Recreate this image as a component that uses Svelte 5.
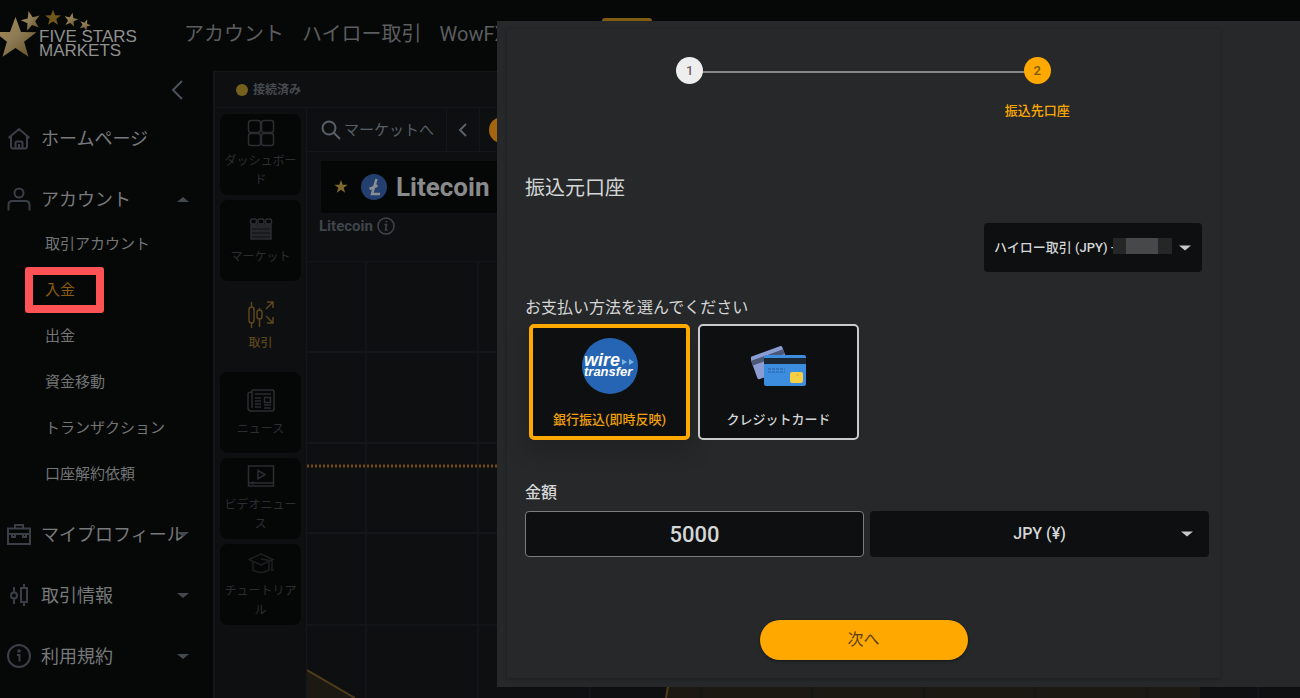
<script>
  let method = $state('wire');
  let amount = $state('5000');
  let currency = $state('jpy');
  let account = $state('highlow');

  const subLinks = ['取引アカウント', '入金', '出金', '資金移動', 'トランザクション', '口座解約依頼'];

  const lowerMenu = [
    { label: 'マイプロフィール', icon: 'case' },
    { label: '取引情報', icon: 'candles' },
    { label: '利用規約', icon: 'info' }
  ];

  const tools = [
    { label: 'ダッシュボード', icon: 'grid' },
    { label: 'マーケット', icon: 'market' },
    { label: '取引', icon: 'trade' },
    { label: 'ニュース', icon: 'news' },
    { label: 'ビデオニュース', icon: 'video' },
    { label: 'チュートリアル', icon: 'cap' }
  ];

  const columns = [59, 171, 283, 394, 505, 617, 728, 840, 951];
  const rows = [0, 91, 182, 272, 364];
</script>

{#snippet icon(name)}
  {#if name === 'home'}
    <svg class="icon" viewBox="0 0 24 24"><path d="M1.500 12 12 3l10.500 9M4 10.500v10q0 2 2 2h12q2 0 2-2v-10M8.500 22.500V17q0-1.500 1.500-1.500h4q1.500 0 1.500 1.500v5.500M12 18v4.500" /></svg>
  {:else if name === 'user'}
    <svg class="icon" viewBox="0 0 24 24"><circle cx="12" cy="6" r="4.500" /><path d="M1.500 23.500V18q0-4 4-4h13q4 0 4 4v5.500" /></svg>
  {:else if name === 'case'}
    <svg class="icon" viewBox="0 0 24 24"><path d="M1 6.500h22v15.500H1zM8 6V3h8v3M1 12h22M5 12v3h3v-3M16 12v3h3v-3" /></svg>
  {:else if name === 'candles'}
    <svg class="icon" viewBox="0 0 24 24"><path d="M7 4v6M7 15v6M17 1v4M17 19v4M14 5h6v14h-6z" /><circle cx="7" cy="12.500" r="3" /></svg>
  {:else if name === 'info'}
    <svg class="icon" viewBox="0 0 24 24"><circle cx="12" cy="12" r="11" /><circle cx="12" cy="7" r=".8" /><path d="M10 11h2.500v6.500" /></svg>
  {:else if name === 'grid'}
    <svg class="icon" viewBox="0 0 28 28"><rect x="1.500" y="1.500" width="12" height="12" rx="2.500" /><rect x="14.500" y="1.500" width="12" height="12" rx="2.500" /><rect x="1.500" y="14.500" width="12" height="12" rx="2.500" /><rect x="14.500" y="14.500" width="12" height="12" rx="2.500" /></svg>
  {:else if name === 'market'}
    <svg class="icon" viewBox="0 0 28 28"><rect x="3.500" y="4" width="6" height="5" rx="2" /><rect x="11" y="4" width="6" height="5" rx="2" /><rect x="18.500" y="4" width="6" height="5" rx="2" /><path class="solid" d="M4 10h20v14H4z" /><path d="M4 12h20M4 16h20M4 20h20" /></svg>
  {:else if name === 'trade'}
    <svg class="icon" viewBox="0 0 28 28"><path d="M4.500 1v5M4.500 22v5M12.500 7v2M12.500 18v8M19 8l7-7M20 1h6v6M19 15l7 7M26 16v6h-6" /><rect x="2" y="6" width="5" height="16" rx="2.500" /><rect x="10" y="9" width="5" height="9" rx="2.500" /></svg>
  {:else if name === 'news'}
    <svg class="icon" viewBox="0 0 28 28"><path d="M5 3h20q2 0 2 2v17q0 2-2 2H4q-3 0-3-3V7q0-2 4-2M5 3v18M8 7h16M8 11h6M8 14h6M8 17h6M8 20h6M17 18h7M17 21h7" /><rect x="17.500" y="10.500" width="6" height="5" /></svg>
  {:else if name === 'video'}
    <svg class="icon" viewBox="0 0 28 28"><path d="M1.500 3h25v20h-25zM1 20h26M11 7.500l7 4-7 4.500zM6 18.500v3" /></svg>
  {:else if name === 'cap'}
    <svg class="icon faint" viewBox="0 0 28 28"><path d="M14 5 26 10.500 14 16 2 10.500zM6 13v8q8 5 16 0v-8M14 10l11 2v10M24 21h3" /></svg>
  {/if}
{/snippet}

<div class="page">
  <header class="top">
    <a class="logo" href="#home">
      <svg viewBox="0 0 92 50" aria-hidden="true">
        <defs>
          <linearGradient id="gold" x1="0" y1="0" x2="1" y2="1">
            <stop offset="0" stop-color="#a78b52" />
            <stop offset="0.500" stop-color="#8d7a55" />
            <stop offset="1" stop-color="#5f4b1d" />
          </linearGradient>
          <path id="star" d="M0-10 2.500-3.200 9.500-3.100 3.900 1.200 5.900 8.100 0 4.100-5.900 8.100-3.900 1.200-9.500-3.100-2.500-3.200z" />
        </defs>
        <g fill="url(#gold)">
          <use href="#star" transform="translate(15.500 29) scale(2.200)" />
          <use href="#star" transform="translate(31 11) rotate(-14) scale(1.020)" />
          <use href="#star" transform="translate(53 8) scale(.84)" fill="#70581b" />
          <use href="#star" transform="translate(71 10) rotate(12) scale(.74)" />
          <use href="#star" transform="translate(85 15) rotate(22) scale(.6)" />
        </g>
      </svg>
      <span>FIVE STARS<br />MARKETS</span>
    </a>
    <nav class="topnav">
      <a href="#account">アカウント</a>
      <a href="#highlow">ハイロー取引</a>
      <a href="#wow">WowFX</a>
      <span class="tab"></span>
    </nav>
  </header>

  <aside class="side">
    <button class="collapse" aria-label="閉じる">
      <svg viewBox="0 0 12 20"><path d="M11 1 2 10l9 9" /></svg>
    </button>
    <nav class="menu">
      <a class="item" href="#top">{@render icon('home')}<span>ホームページ</span></a>
      <div>
        <button class="item">{@render icon('user')}<span>アカウント</span><i class="caret up"></i></button>
        <ul class="sub">
          {#each subLinks as link}
            <li><a href="#sub" class:current={link === '入金'}>{link}</a></li>
          {/each}
        </ul>
      </div>
      {#each lowerMenu as entry}
        <button class="item">{@render icon(entry.icon)}<span>{entry.label}</span><i class="caret"></i></button>
      {/each}
    </nav>
  </aside>

  <main class="desk">
    <div class="status"><i class="dot"></i>接続済み</div>
    <div class="work">
      <div class="tools">
        {#each tools as tool}
          <button class="tool" class:active={tool.icon === 'trade'}>{@render icon(tool.icon)}<span>{tool.label}</span></button>
        {/each}
      </div>
      <section class="trade">
        <div class="bar">
          <button class="search">
            <svg viewBox="0 0 20 20"><circle cx="8" cy="8" r="6.500" /><path d="m12.500 12.500 6.500 6.500" /></svg>
            マーケットへ
          </button>
          <button class="prev" aria-label="前へ"><svg viewBox="0 0 10 14"><path d="M8 1 2 7l6 6" /></svg></button>
          <span class="coin"></span>
        </div>
        <div class="asset">
          <svg class="fav" viewBox="-10 -10 20 20"><use href="#star" /></svg>
          <svg class="ltc" viewBox="0 0 26 26"><circle cx="13" cy="13" r="13" /><path d="M15.500 5 11 20h8M8.500 15l8-3.500" /></svg>
          <h1>Litecoin</h1>
        </div>
        <p class="caption">Litecoin
          <svg viewBox="0 0 18 18"><circle cx="9" cy="9" r="8" /><path d="M7.500 7.500h2L8.500 13h2M9.500 4v1.500" /></svg>
        </p>
        <svg class="chart" viewBox="0 0 993 437" preserveAspectRatio="xMinYMin slice" aria-hidden="true">
          <path class="fill" d="M0 409 48 437H0zM361 425H893v12H359z" />
          {#each columns as x}<path class="grid" d="M{x} 0V437" />{/each}
          {#each rows as y}<path class="grid" d="M0 {y}H993" />{/each}
          <path class="curve" d="M0 409 48 437M361 425 359 437" />
          <path class="price" d="M0 205H993" />
        </svg>
      </section>
    </div>
  </main>

  <div class="dialog" role="dialog" aria-label="入金">
    <form class="sheet" onsubmit={(event) => event.preventDefault()}>
      <ol class="steps">
        <li><b>1</b></li>
        <li class="now"><b>2</b><span>振込先口座</span></li>
      </ol>

      <h2>振込元口座</h2>
      <div class="pick source">
        <select bind:value={account} aria-label="振込元口座">
          <option value="highlow">ハイロー取引 (JPY) -</option>
        </select>
        <span class="mask"><i></i><i></i><i></i></span>
        <i class="caret"></i>
      </div>

      <fieldset>
        <legend>お支払い方法を選んでください</legend>
        <label class="method" class:chosen={method === 'wire'}>
          <input type="radio" name="method" value="wire" bind:group={method} />
          <svg class="wire" viewBox="0 0 56 56">
            <circle cx="28" cy="28" r="28" fill="#2565b3" />
            <text x="2" y="28" class="w1">wire</text>
            <text x="2" y="38" class="w2">transfer</text>
            <path d="m40 21 5 3-5 3zM47 21l5 3-5 3z" fill="#79b5df" />
          </svg>
          <span>銀行振込(即時反映)</span>
        </label>
        <label class="method" class:chosen={method === 'card'}>
          <input type="radio" name="method" value="card" bind:group={method} />
          <svg class="cards" viewBox="0 0 56 56">
            <g transform="rotate(-20 20 22)">
              <rect x="1" y="12" width="34" height="24" rx="2" fill="#8b9cd3" />
              <path d="M1 16h34v5H1z" fill="#4c5878" />
            </g>
            <rect x="13" y="17" width="42" height="31" rx="2" fill="#3c8ddf" />
            <path d="M13 20h42v6H13z" fill="#1b2732" />
            <path d="M17 31h17M17 34h17" stroke="#245f9d" stroke-dasharray="3 1" />
            <rect x="39" y="34" width="13" height="11" rx="2" fill="#f7cf45" />
            <path d="M45 37h3" stroke="#e3ad2b" />
          </svg>
          <span>クレジットカード</span>
        </label>
      </fieldset>

      <label class="heading" for="amount">金額</label>
      <div class="sum">
        <input id="amount" type="text" inputmode="numeric" bind:value={amount} />
        <div class="pick money">
          <select bind:value={currency} aria-label="通貨">
            <option value="jpy">JPY (¥)</option>
          </select>
          <i class="caret"></i>
        </div>
      </div>

      <div class="actions"><button class="next" type="submit">次へ</button></div>
    </form>
  </div>
</div>

<style>
  :global(body) {
    margin: 0;
    background: #060807;
  }
  :global(*) {
    box-sizing: border-box;
  }
  .page {
    position: relative;
    display: grid;
    grid-template: 71px 1fr / 213px 1fr;
    min-height: 100vh;
    overflow: hidden;
    background: #060807;
    color: #77797b;
    font: 16px/20px Roboto, 'Noto Sans CJK JP', sans-serif;
  }
  a {
    color: inherit;
    text-decoration: none;
  }
  button,
  input,
  select {
    margin: 0;
    padding: 0;
    border: 0;
    background: none;
    color: inherit;
    font: inherit;
  }
  svg {
    display: block;
    flex: none;
  }
  .icon,
  .collapse svg,
  .bar svg,
  .caption svg {
    fill: none;
    stroke: currentColor;
    stroke-width: 1.500;
  }
  .caret {
    border: solid transparent;
    border-width: 5px 6px 0;
    border-top-color: #444950;
  }
  .caret.up {
    border-width: 0 6px 5px;
    border-bottom-color: #444950;
  }

  .top {
    grid-column: 1 / -1;
    display: flex;
  }
  .logo {
    position: relative;
    width: 184px;
  }
  .logo svg {
    width: 92px;
    height: 50px;
    margin-top: 10px;
  }
  .logo span {
    position: absolute;
    top: 30px;
    left: 39px;
    color: #909090;
    font: 17px/14px 'Liberation Sans', sans-serif;
    white-space: nowrap;
  }
  .topnav {
    display: flex;
    align-items: start;
    gap: 18px;
    padding-top: 18px;
    font-size: 20px;
    line-height: 32px;
    color: #5b5d5f;
    white-space: nowrap;
  }
  .tab {
    width: 50px;
    height: 32px;
    margin-left: 77px;
    border-radius: 3px;
    background: #805b12;
  }

  .collapse {
    display: block;
    margin: 9px 0 0 171px;
    color: #4a515b;
  }
  .collapse svg {
    width: 12px;
    height: 20px;
    stroke-width: 2;
  }
  .menu {
    display: grid;
    gap: 17px;
    padding: 16px 24px 0 7px;
  }
  .item {
    display: flex;
    align-items: center;
    gap: 10px;
    width: 100%;
    height: 44px;
    font-size: 18px;
    text-align: left;
    white-space: nowrap;
  }
  .item .icon {
    width: 24px;
    height: 24px;
    color: #3a3e46;
    stroke-width: 2;
  }
  .item span {
    width: 130px;
    flex: 1;
    padding-top: 2px;
  }
  .item .caret {
    margin-left: -10px;
  }
  .sub {
    display: grid;
    gap: 11px;
    margin: 0;
    padding: 6px 0 3px 38px;
    list-style: none;
    font-size: 15px;
    line-height: 35px;
    color: #727476;
  }
  .sub .current {
    position: relative;
    color: #8b5b10;
  }
  .current::after {
    content: '';
    position: absolute;
    inset: -14px -29px -14px -20px;
    border: 8px solid #ff5255;
    border-radius: 3px;
  }

  .desk {
    display: flex;
    flex-direction: column;
    min-width: 0;
    border: solid #14161a;
    border-width: 1px 0 0 2px;
    background: #0d0f11;
  }
  .status {
    display: flex;
    align-items: center;
    gap: 5px;
    height: 36px;
    padding-left: 21px;
    border-bottom: 1px solid #14161a;
    color: #454a4f;
    font-size: 12px;
    font-weight: 700;
  }
  .dot {
    width: 12px;
    height: 12px;
    border-radius: 50%;
    background: #75601e;
  }
  .work {
    display: flex;
    flex: 1;
  }
  .tools {
    display: grid;
    align-content: start;
    gap: 5px;
    width: 92px;
    padding: 6px 5px 0;
    border-right: 1px solid #14161a;
  }
  .tool {
    display: flex;
    flex-direction: column;
    align-items: center;
    justify-content: center;
    gap: 5px;
    height: 81px;
    padding: 0 3px;
    border-radius: 8px;
    background: #050706;
    color: #2b2d31;
    font-size: 12px;
    line-height: 19px;
    word-break: break-all;
  }
  .tool .icon {
    width: 28px;
    height: 28px;
  }
  .tool .solid {
    fill: #191b1e;
  }
  .tool .faint {
    color: #1d1f21;
  }
  .tool.active {
    background: none;
    color: #5c461b;
    font-weight: 500;
  }
  .trade {
    flex: 1;
    min-width: 0;
  }
  .bar {
    display: flex;
    height: 44px;
    border-bottom: 1px solid #14161a;
    color: #5a6068;
  }
  .search {
    display: flex;
    align-items: center;
    gap: 3px;
    width: 140px;
    padding-left: 14px;
    border-right: 1px solid #14161a;
    font-size: 15px;
    white-space: nowrap;
  }
  .search svg {
    width: 20px;
    height: 20px;
    stroke-width: 2;
  }
  .prev {
    display: grid;
    place-items: center;
    width: 33px;
    border-right: 1px solid #14161a;
  }
  .prev svg {
    width: 10px;
    height: 14px;
    stroke-width: 2;
  }
  .coin {
    width: 26px;
    height: 26px;
    margin: 9px;
    border-radius: 50%;
    background: #a5650f;
  }
  .asset {
    display: flex;
    align-items: center;
    height: 52px;
    margin: 9px 14px 0;
    padding-left: 13px;
    border-radius: 3px;
    background: #050706;
  }
  .fav {
    width: 14px;
    height: 14px;
    fill: #80682d;
  }
  .ltc {
    width: 26px;
    height: 26px;
    margin: 0 9px 0 13px;
    fill: #223f70;
  }
  .ltc path {
    fill: none;
    stroke: #8a8d91;
    stroke-width: 2.500;
  }
  h1 {
    margin: 0;
    color: #898a8c;
    font-size: 26px;
    line-height: 32px;
  }
  .caption {
    display: flex;
    align-items: center;
    gap: 4px;
    margin: 2px 12px 24px;
    color: #40454b;
    font-size: 15px;
    font-weight: 700;
    line-height: 22px;
  }
  .caption svg {
    width: 18px;
    height: 18px;
  }
  .chart {
    width: 100%;
    height: 437px;
  }
  .grid {
    stroke: #131518;
    stroke-width: 2;
  }
  .fill {
    fill: #1c1912;
  }
  .curve {
    fill: none;
    stroke: #4f3d1a;
    stroke-width: 2;
  }
  .price {
    stroke: #704a12;
    stroke-width: 3;
    stroke-dasharray: 2 2;
  }

  .dialog {
    position: absolute;
    top: 21px;
    right: 0;
    left: 497px;
    padding: 8px 80px 9px 10px;
    background: #262829;
    color: #d4d6d7;
  }
  .sheet {
    padding: 28px 11px 18px 18px;
    box-shadow: 0 1px 3px #1c1e1f;
  }
  .steps {
    display: grid;
    grid-template-columns: 1fr 1fr;
    height: 62px;
    margin: 0 -2px 53px -9px;
    padding: 0;
    list-style: none;
    color: #ffa800;
    font-size: 13px;
    font-weight: 500;
    text-align: center;
  }
  .steps li {
    position: relative;
  }
  .steps li + li::before {
    content: '';
    position: absolute;
    top: 14px;
    right: 50%;
    width: 100%;
    height: 2px;
    background: #858686;
  }
  .steps b {
    position: relative;
    z-index: 1;
    display: block;
    width: 27px;
    margin: 0 auto 17px;
    border-radius: 50%;
    background: #eee;
    color: #70606a;
    font-weight: 500;
    line-height: 27px;
  }
  .steps .now b {
    background: #ffa800;
    color: #795719;
  }
  .steps span {
    display: block;
  }
  h2 {
    margin: 0 0 19px;
    font-size: 20px;
    font-weight: 400;
    line-height: 32px;
  }
  .pick {
    position: relative;
    border-radius: 4px;
    background: #0d0f10;
  }
  .pick select {
    display: block;
    width: 100%;
    height: 100%;
    appearance: none;
    font-weight: 500;
  }
  .pick .caret {
    position: absolute;
    top: 50%;
    right: 11px;
    border-top-color: #c6c8c9;
    transform: translateY(-50%);
    pointer-events: none;
  }
  .source {
    width: 218px;
    height: 49px;
    margin: 0 7px 26px auto;
    font-size: 13px;
  }
  .source select {
    padding-left: 10px;
  }
  .mask {
    position: absolute;
    top: 15px;
    right: 30px;
    display: grid;
    grid-template-columns: 13px 32px 14px;
    height: 16px;
  }
  .mask i {
    background: #252727;
  }
  .mask i:nth-child(2) {
    background: #474849;
  }
  fieldset {
    display: flex;
    gap: 8px;
    margin: 0 0 43px;
    padding: 6px 4px 0;
    border: 0;
  }
  legend {
    margin: 0 -4px;
    padding: 0;
  }
  .method {
    position: relative;
    display: flex;
    flex-direction: column;
    align-items: center;
    gap: 16px;
    width: 161px;
    height: 116px;
    padding-top: 12px;
    border: 2px solid #c9cacb;
    border-radius: 5px;
    background: #0d0f10;
    font-size: 13px;
    font-weight: 500;
  }
  .method input {
    position: absolute;
    opacity: 0;
  }
  .method.chosen {
    padding-top: 10px;
    border: 4px solid #ffa800;
    color: #f0a00a;
    box-shadow: 0 10px 18px #202223;
  }
  .method svg {
    width: 56px;
    height: 56px;
  }
  .wire text {
    fill: #fff;
    font-family: 'Liberation Sans', sans-serif;
    font-style: italic;
    font-weight: 700;
  }
  .w1 {
    font-size: 18px;
  }
  .w2 {
    font-size: 13px;
  }
  .heading {
    display: block;
    margin-bottom: 8px;
    font-weight: 500;
  }
  .sum {
    display: grid;
    grid-template-columns: 1fr 1fr;
    gap: 6px;
    height: 46px;
    margin-bottom: 63px;
  }
  .sum input {
    min-width: 0;
    border: 1px solid #7b7c7d;
    border-radius: 4px;
    background: #0d0f10;
    font-size: 22px;
    font-weight: 500;
    text-align: center;
  }
  .money select {
    text-align: center;
    text-align-last: center;
  }
  .money .caret {
    right: 16px;
  }
  .actions {
    display: flex;
    justify-content: center;
    padding-right: 7px;
  }
  .next {
    width: 208px;
    height: 40px;
    border-radius: 20px;
    background: #ffa800;
    color: #5c4008;
    box-shadow: 0 1px 3px #151718;
  }
</style>
